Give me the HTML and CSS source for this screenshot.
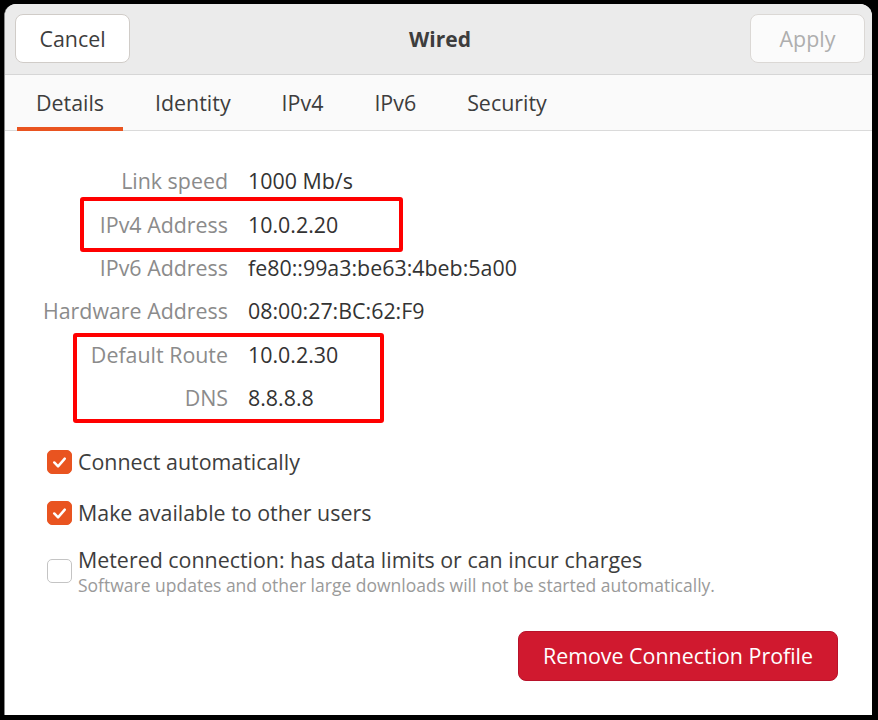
FILE: index.html
```html
<!DOCTYPE html>
<html lang="en">
<head>
<meta charset="utf-8">
<title>Wired</title>
<link rel="stylesheet" href="styles.css">
</head>
<body>
<div class="window">
  <header class="headerbar">
    <button class="btn">Cancel</button>
    <div class="title">Wired</div>
    <button class="btn btn-disabled">Apply</button>
  </header>
  <nav class="tabs">
    <div class="tab active">Details</div>
    <div class="tab">Identity</div>
    <div class="tab">IPv4</div>
    <div class="tab">IPv6</div>
    <div class="tab">Security</div>
  </nav>
  <main class="content">
    <div class="details">
      <div class="label">Link speed</div><div class="value">1000 Mb/s</div>
      <div class="label">IPv4 Address</div><div class="value">10.0.2.20</div>
      <div class="label">IPv6 Address</div><div class="value">fe80::99a3:be63:4beb:5a00</div>
      <div class="label">Hardware Address</div><div class="value">08:00:27:BC:62:F9</div>
      <div class="label">Default Route</div><div class="value">10.0.2.30</div>
      <div class="label">DNS</div><div class="value">8.8.8.8</div>
    </div>
    <div class="checks">
      <div class="check-row">
        <span class="box checked"><svg viewBox="0 0 24 24" width="24" height="24"><polyline points="6.5,12.5 10.5,16.5 17.5,8.5" fill="none" stroke="#fff" stroke-width="2.6" stroke-linecap="round" stroke-linejoin="round"/></svg></span>
        <span class="check-text">Connect automatically</span>
      </div>
      <div class="check-row">
        <span class="box checked"><svg viewBox="0 0 24 24" width="24" height="24"><polyline points="6.5,12.5 10.5,16.5 17.5,8.5" fill="none" stroke="#fff" stroke-width="2.6" stroke-linecap="round" stroke-linejoin="round"/></svg></span>
        <span class="check-text">Make available to other users</span>
      </div>
      <div class="check-row metered">
        <span class="box"></span>
        <div class="check-block">
          <div class="check-text check-title">Metered connection: has data limits or can incur charges</div>
          <div class="check-sub">Software updates and other large downloads will not be started automatically.</div>
        </div>
      </div>
    </div>
    <div class="actions">
      <button class="btn-danger">Remove Connection Profile</button>
    </div>
  </main>
  <div class="mark mark-ipv4"></div>
  <div class="mark mark-route"></div>
</div>
</body>
</html>
```

FILE: styles.css
```css
* { box-sizing: border-box; }

html, body {
  margin: 0;
  padding: 0;
  background: #000;
}

body {
  width: 878px;
  height: 720px;
  padding: 4px 6px 5px 4px;
  font-family: "Open Sans", "Noto Sans", sans-serif;
  font-size: 21.4px;
  color: #3d3d3d;
}

.window {
  position: relative;
  height: 711px;
  background: #fff;
  border-left: 1px solid #8a8a8a;
  border-radius: 12px 12px 0 0;
  overflow: hidden;
}

.headerbar {
  height: 71px;
  background: #ebebeb;
  border-bottom: 1px solid #d6d6d6;
  display: flex;
  align-items: center;
  justify-content: space-between;
  padding: 0 7px 1px 10px;
}

.btn {
  width: 115px;
  height: 49px;
  border: 1px solid #d0ccc8;
  border-radius: 8px;
  background: #fff;
  font-family: inherit;
  font-size: 21.4px;
  color: #3d3d3d;
  padding: 0;
}

.btn-disabled {
  color: #aeaeae;
  background: #fbfbfb;
  border-color: #dbd8d5;
}

.title {
  font-weight: 700;
  font-size: 21px;
  color: #3d3d3d;
}

.tabs {
  height: 56px;
  background: #fafafa;
  border-bottom: 1px solid #dadada;
  display: flex;
  gap: 13px;
  padding-left: 12px;
}

.tab {
  position: relative;
  padding: 0 19px;
  line-height: 55px;
  color: #3d3d3d;
}

.tab.active::after {
  content: "";
  position: absolute;
  left: 0;
  right: 0;
  bottom: -1px;
  height: 4px;
  background: #e95420;
}

.content {
  padding-top: 28px;
}

.details {
  display: grid;
  grid-template-columns: 223px auto;
  grid-auto-rows: 43.4px;
  column-gap: 20px;
  align-items: center;
}

.label {
  text-align: right;
  color: #8b8b8b;
}

.value {
  color: #333;
}

.checks {
  margin-top: 29px;
  padding-left: 42px;
  display: flex;
  flex-direction: column;
  gap: 23px;
}

.check-row {
  display: flex;
  align-items: center;
  gap: 6px;
  line-height: 28px;
}

.metered {
  margin-top: -4.5px;
}

.box {
  flex: none;
  width: 25px;
  height: 24px;
  border-radius: 5px;
  border: 1px solid #c4c4c4;
  background: #fff;
  display: flex;
  align-items: center;
  justify-content: center;
}

.box.checked {
  background: #e95420;
  border-color: #e95420;
}

.check-text {
  color: #3d3d3d;
}

.check-title {
  line-height: 28px;
}

.check-sub {
  font-size: 17.5px;
  line-height: 22px;
  color: #9a9a9a;
}

.actions {
  display: flex;
  justify-content: flex-end;
  padding-right: 34px;
  margin-top: 35px;
}

.btn-danger {
  width: 320px;
  height: 50px;
  border: 1px solid #b8122a;
  border-radius: 8px;
  background: #d0192f;
  color: #fff;
  font-family: inherit;
  font-size: 21.4px;
  padding: 0;
}

.mark {
  position: absolute;
  border: 4px solid #f00;
  border-radius: 3px;
}

.mark-ipv4 {
  left: 75px;
  top: 193px;
  width: 323px;
  height: 55px;
}

.mark-route {
  left: 68px;
  top: 329px;
  width: 311px;
  height: 90px;
}
```
